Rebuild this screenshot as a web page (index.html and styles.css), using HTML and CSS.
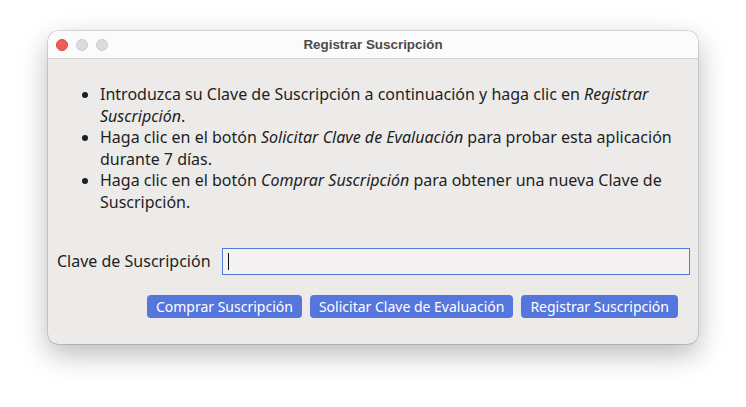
FILE: index.html
```html
<!DOCTYPE html>
<html>
<head>
<meta charset="utf-8">
<link rel="stylesheet" href="styles.css">
</head>
<body>
<div class="window">
  <div class="titlebar">
    <div class="lights">
      <span class="light red"></span>
      <span class="light gray"></span>
      <span class="light gray"></span>
    </div>
    <div class="title">Registrar Suscripción</div>
  </div>
  <div class="content">
    <ul class="info">
      <li>Introduzca su Clave de Suscripción a continuación y haga clic en <em>Registrar Suscripción</em>.</li>
      <li>Haga clic en el botón <em>Solicitar Clave de Evaluación</em> para probar esta aplicación durante 7 días.</li>
      <li>Haga clic en el botón <em>Comprar Suscripción</em> para obtener una nueva Clave de Suscripción.</li>
    </ul>
    <div class="field">
      <label class="label">Clave de Suscripción</label>
      <div class="input"><span class="caret"></span></div>
    </div>
    <div class="buttons">
      <button class="btn">Comprar Suscripción</button>
      <button class="btn">Solicitar Clave de Evaluación</button>
      <button class="btn">Registrar Suscripción</button>
    </div>
  </div>
</div>
</body>
</html>
```

FILE: styles.css
```css
html, body {
  margin: 0;
  padding: 0;
  background: #ffffff;
}
body {
  width: 746px;
  height: 407px;
  overflow: hidden;
  padding-top: 31px;
  box-sizing: border-box;
}
.window {
  margin-left: 48px;
  width: 650px;
  height: 313px;
  border-radius: 10px;
  background: #ecebea;
  box-shadow: 0 0 0 0.5px rgba(0,0,0,0.25), 0 10px 28px rgba(0,0,0,0.28);
  overflow: hidden;
  display: flex;
  flex-direction: column;
}
.titlebar {
  height: 27px;
  background: #fbfbfb;
  border-bottom: 1px solid #d2d2d2;
  display: flex;
  align-items: center;
  position: relative;
}
.lights {
  display: flex;
  gap: 8px;
  padding-left: 8px;
}
.light {
  width: 12px;
  height: 12px;
  border-radius: 50%;
  box-sizing: border-box;
}
.light.red {
  background: #ec5f57;
  border: 0.5px solid #d44a42;
}
.light.gray {
  background: #dcdcdc;
  border: 0.5px solid #cacaca;
}
.title {
  position: absolute;
  left: 0;
  right: 0;
  text-align: center;
  font-family: "Liberation Sans", Arial, sans-serif;
  font-weight: bold;
  font-size: 13.4px;
  color: #4a4a4a;
}
.content {
  flex: 1;
  padding: 25px 8px 0 9px;
  font-family: "Noto Sans", sans-serif;
  font-size: 16px;
  color: #1e1e1e;
}
.info {
  margin: 0;
  padding-left: 43px;
  padding-right: 0;
  line-height: 21.6px;
}
.info em {
  font-style: italic;
}
.field {
  display: flex;
  align-items: center;
  margin-top: 34px;
  gap: 11px;
}
.label {
  white-space: nowrap;
}
.input {
  flex: 1;
  height: 27px;
  box-sizing: border-box;
  border: 1px solid #4f78dc;
  background: #f4f2f3;
  display: flex;
  align-items: center;
  padding-left: 5px;
}
.caret {
  width: 1px;
  height: 17px;
  background: #111;
}
.buttons {
  display: flex;
  justify-content: flex-end;
  gap: 8px;
  margin-top: 20px;
  padding-right: 12px;
}
.btn {
  height: 23px;
  border: none;
  border-radius: 4px;
  background: #5576dc;
  color: #ffffff;
  font-family: "Noto Sans", sans-serif;
  font-size: 14px;
  padding: 0 9px;
  line-height: 23px;
}
```
